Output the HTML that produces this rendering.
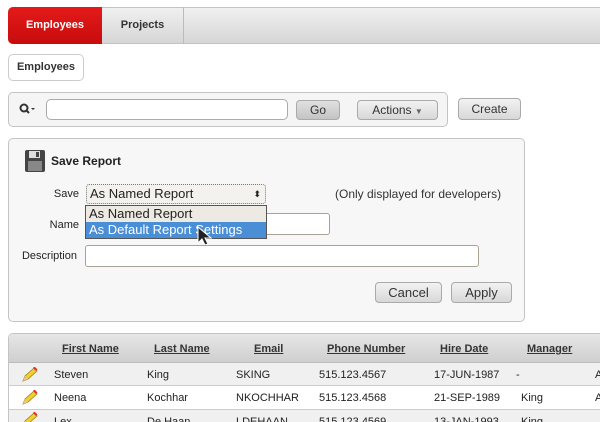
<!DOCTYPE html>
<html><head><style>
*{box-sizing:border-box;margin:0;padding:0}
html,body{width:600px;height:422px;overflow:hidden}
body{background:#fff;font-family:"Liberation Sans",sans-serif;position:relative;color:#222}
.a{position:absolute}
.btn{position:absolute;border:1px solid #aaa;border-radius:4px;background:linear-gradient(#f2f2f2,#d8d8d8);font-size:12px;color:#333;text-align:center}
.inp{position:absolute;border:1px solid #a9a196;border-radius:3px;background:#fff}
.lbl{position:absolute;font-size:11px;color:#222;text-align:right}
.h span{text-decoration:underline}
.p{position:absolute;left:12px;top:4px}
</style></head><body>
<svg width="0" height="0" style="position:absolute"><defs><g id="pen"><path d="M2 14l2-5 9-8 3 3-9 8z" fill="#f0d030" stroke="#a08010" stroke-width="0.8"/><path d="M12 1l3 3 1.5-1.5-3-3z" fill="#e03030"/><path d="M2 14l2-5 3 3z" fill="#e8c890"/></g></defs></svg>
<div class="a" style="left:8px;top:7px;width:600px;height:37px;border:1px solid #c4c4c4;border-radius:5px 0 0 5px;background:linear-gradient(#f0f0f0,#d6d6d6)"></div>
<div class="a" style="left:8px;top:7px;width:94px;height:37px;border-radius:5px 0 0 5px;background:linear-gradient(#e41a1a,#c70c0c);color:#fff;font-size:11px;font-weight:bold;text-align:center;line-height:37px">Employees</div>
<div class="a" style="left:102px;top:7px;width:82px;height:37px;border-right:1px solid #bbb;font-size:11px;font-weight:bold;color:#333;text-align:center;line-height:37px">Projects</div>
<div class="a" style="left:8px;top:54px;width:76px;height:27px;border:1px solid #ccc;border-radius:5px;font-size:11px;font-weight:bold;color:#333;text-align:center;line-height:25px">Employees</div>
<div class="a" style="left:8px;top:92px;width:440px;height:35px;border:1px solid #c4c4c4;border-radius:5px;background:#f5f5f5"></div>
<svg class="a" style="left:19px;top:103px" width="18" height="12"><circle cx="5" cy="5" r="3.5" fill="none" stroke="#333" stroke-width="2"/><line x1="7.5" y1="7.5" x2="10" y2="10" stroke="#333" stroke-width="2"/><path d="M12 5h4l-2 2z" fill="#333"/></svg>
<div class="inp" style="left:46px;top:99px;width:242px;height:21px;border-color:#aaa;border-radius:5px"></div>
<div class="btn" style="left:296px;top:100px;width:44px;height:20px;line-height:18px;background:linear-gradient(#e0e0e0,#c4c4c4)">Go</div>
<div class="btn" style="left:357px;top:100px;width:81px;height:20px;line-height:18px">Actions <span style="font-size:8px;color:#666">▼</span></div>
<div class="btn" style="left:458px;top:98px;width:63px;height:22px;line-height:20px">Create</div>
<div class="a" style="left:8px;top:138px;width:517px;height:184px;border:1px solid #c4c4c4;border-radius:5px;background:#f7f7f7"></div>
<svg class="a" style="left:25px;top:150px" width="20" height="22"><rect x="0" y="0" width="20" height="22" rx="2" fill="#444"/><rect x="4" y="1" width="11" height="7" fill="#ddd"/><rect x="11" y="2" width="3" height="5" fill="#444"/><rect x="3" y="11" width="14" height="10" fill="#888"/></svg>
<div class="a" style="left:51px;top:154px;font-size:12px;font-weight:bold">Save Report</div>
<div class="lbl" style="left:20px;width:59px;top:188px">Save</div>
<div class="a" style="left:86px;top:184px;width:180px;height:20px;border:1px dotted #777;border-radius:3px;background:#f4f2ee;font-size:13px;padding-left:3px;line-height:18px">As Named Report<span style="position:absolute;right:4px;top:0;font-size:9px">⬍</span></div>
<div class="a" style="left:335px;top:187px;font-size:12px;color:#333">(Only displayed for developers)</div>
<div class="lbl" style="left:20px;width:59px;top:219px">Name</div>
<div class="inp" style="left:240px;top:213px;width:90px;height:22px"></div>
<div class="a" style="left:85px;top:205px;width:182px;height:34px;border:1px solid #555;background:#ede9e3;font-size:13px">
<div style="height:16px;line-height:16px;padding-left:3px">As Named Report</div>
<div style="height:16px;line-height:16px;padding-left:3px;background:#4a8fd6;color:#fff">As Default Report Settings</div></div>
<svg class="a" style="left:197px;top:226px" width="16" height="22"><path d="M1 1v16l4-4 3 6 3-1-3-6h6z" fill="#222" stroke="#fff" stroke-width="1"/></svg>
<div class="lbl" style="left:10px;width:67px;top:250px">Description</div>
<div class="inp" style="left:85px;top:245px;width:394px;height:22px"></div>
<div class="btn" style="left:375px;top:282px;width:67px;height:21px;line-height:19px;font-size:13px">Cancel</div>
<div class="btn" style="left:451px;top:282px;width:61px;height:21px;line-height:19px;font-size:13px">Apply</div>
<div class="a" style="left:8px;top:333px;width:600px;height:100px;border:1px solid #c4c4c4;border-radius:5px 0 0 0;overflow:hidden">
<div class="h" style="height:29px;background:linear-gradient(#e6e6e6,#cfcfcf);border-bottom:1px solid #bbb;position:relative;font-size:11px;font-weight:bold;color:#333">
<span class="a" style="left:53px;top:9px">First Name</span><span class="a" style="left:145px;top:9px">Last Name</span><span class="a" style="left:245px;top:9px">Email</span><span class="a" style="left:318px;top:9px">Phone Number</span><span class="a" style="left:431px;top:9px">Hire Date</span><span class="a" style="left:518px;top:9px">Manager</span></div>
<div style="height:23px;background:#f0f0f0;border-bottom:1px solid #ccc;position:relative;font-size:11px">
<svg class="p" width="17" height="16"><use href="#pen"/></svg><span class="a" style="left:45px;top:6px">Steven</span><span class="a" style="left:138px;top:6px">King</span><span class="a" style="left:227px;top:6px">SKING</span><span class="a" style="left:310px;top:6px">515.123.4567</span><span class="a" style="left:425px;top:6px">17-JUN-1987</span><span class="a" style="left:507px;top:6px">-</span><span class="a" style="left:586px;top:6px">A</span></div>
<div style="height:24px;background:#fff;border-bottom:1px solid #ccc;position:relative;font-size:11px">
<svg class="p" width="17" height="16"><use href="#pen"/></svg><span class="a" style="left:45px;top:6px">Neena</span><span class="a" style="left:138px;top:6px">Kochhar</span><span class="a" style="left:227px;top:6px">NKOCHHAR</span><span class="a" style="left:310px;top:6px">515.123.4568</span><span class="a" style="left:425px;top:6px">21-SEP-1989</span><span class="a" style="left:512px;top:6px">King</span><span class="a" style="left:586px;top:6px">A</span></div>
<div style="height:24px;background:#f0f0f0;position:relative;font-size:11px">
<svg class="p" width="17" height="16" style="top:2px"><use href="#pen"/></svg><span class="a" style="left:45px;top:6px">Lex</span><span class="a" style="left:138px;top:6px">De Haan</span><span class="a" style="left:227px;top:6px">LDEHAAN</span><span class="a" style="left:310px;top:6px">515.123.4569</span><span class="a" style="left:425px;top:6px">13-JAN-1993</span><span class="a" style="left:512px;top:6px">King</span></div>
</div>
</body></html>
